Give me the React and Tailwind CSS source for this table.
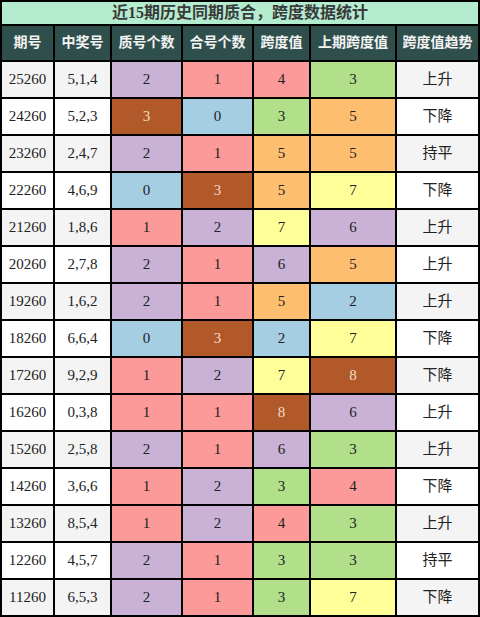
import React from "react";

const rows = [
  ["25260", "5,1,4", 2, 1, 4, 3, "上升"],
  ["24260", "5,2,3", 3, 0, 3, 5, "下降"],
  ["23260", "2,4,7", 2, 1, 5, 5, "持平"],
  ["22260", "4,6,9", 0, 3, 5, 7, "下降"],
  ["21260", "1,8,6", 1, 2, 7, 6, "上升"],
  ["20260", "2,7,8", 2, 1, 6, 5, "上升"],
  ["19260", "1,6,2", 2, 1, 5, 2, "上升"],
  ["18260", "6,6,4", 0, 3, 2, 7, "下降"],
  ["17260", "9,2,9", 1, 2, 7, 8, "下降"],
  ["16260", "0,3,8", 1, 1, 8, 6, "上升"],
  ["15260", "2,5,8", 2, 1, 6, 3, "上升"],
  ["14260", "3,6,6", 1, 2, 3, 4, "下降"],
  ["13260", "8,5,4", 1, 2, 4, 3, "上升"],
  ["12260", "4,5,7", 2, 1, 3, 3, "持平"],
  ["11260", "6,5,3", 2, 1, 3, 7, "下降"],
];

const countColor = {
  0: "bg-[#a6cee3] text-[#222]",
  1: "bg-[#fb9a99] text-[#222]",
  2: "bg-[#cab2d6] text-[#222]",
  3: "bg-[#b15928] text-[#f6dcc8]",
};

const spanColor = {
  2: "bg-[#a6cee3] text-[#222]",
  3: "bg-[#b2df8a] text-[#222]",
  4: "bg-[#fb9a99] text-[#222]",
  5: "bg-[#fdbf6f] text-[#222]",
  6: "bg-[#cab2d6] text-[#222]",
  7: "bg-[#ffff99] text-[#222]",
  8: "bg-[#b15928] text-[#f6dcc8]",
};

const headers = ["期号", "中奖号", "质号个数", "合号个数", "跨度值", "上期跨度值", "跨度值趋势"];

export default function App() {
  return (
    <div
      className="w-[480px] h-[617px] bg-black p-[2px] grid grid-cols-[51px_55px_69px_69px_55px_84px_81px] grid-rows-[22px_34px_repeat(15,35px)] gap-[2px]"
      style={{ fontFamily: '"Liberation Serif", "Noto Sans CJK SC", serif' }}
    >
      <div className="col-span-7 bg-[#b3ecce] flex items-center justify-center text-[16px] font-bold leading-none text-[#3a3a3a]">
        近15期历史同期质合，跨度数据统计
      </div>
      {headers.map((h) => (
        <div
          key={h}
          className="bg-[#2e4f4c] flex items-center justify-center text-[14px] font-bold leading-none text-[#f2f2f2]"
        >
          {h}
        </div>
      ))}
      {rows.map((r, i) => {
        const base = i % 2 === 0 ? "bg-[#f4f4f4]" : "bg-white";
        const cell = "flex items-center justify-center text-[15px] leading-none";
        return (
          <React.Fragment key={r[0]}>
            <div className={`${cell} ${base} text-[#222]`}>{r[0]}</div>
            <div className={`${cell} ${base} text-[#222]`}>{r[1]}</div>
            <div className={`${cell} ${countColor[r[2]]}`}>{r[2]}</div>
            <div className={`${cell} ${countColor[r[3]]}`}>{r[3]}</div>
            <div className={`${cell} ${spanColor[r[4]]}`}>{r[4]}</div>
            <div className={`${cell} ${spanColor[r[5]]}`}>{r[5]}</div>
            <div className={`${cell} ${base} text-[#222]`}>{r[6]}</div>
          </React.Fragment>
        );
      })}
    </div>
  );
}
